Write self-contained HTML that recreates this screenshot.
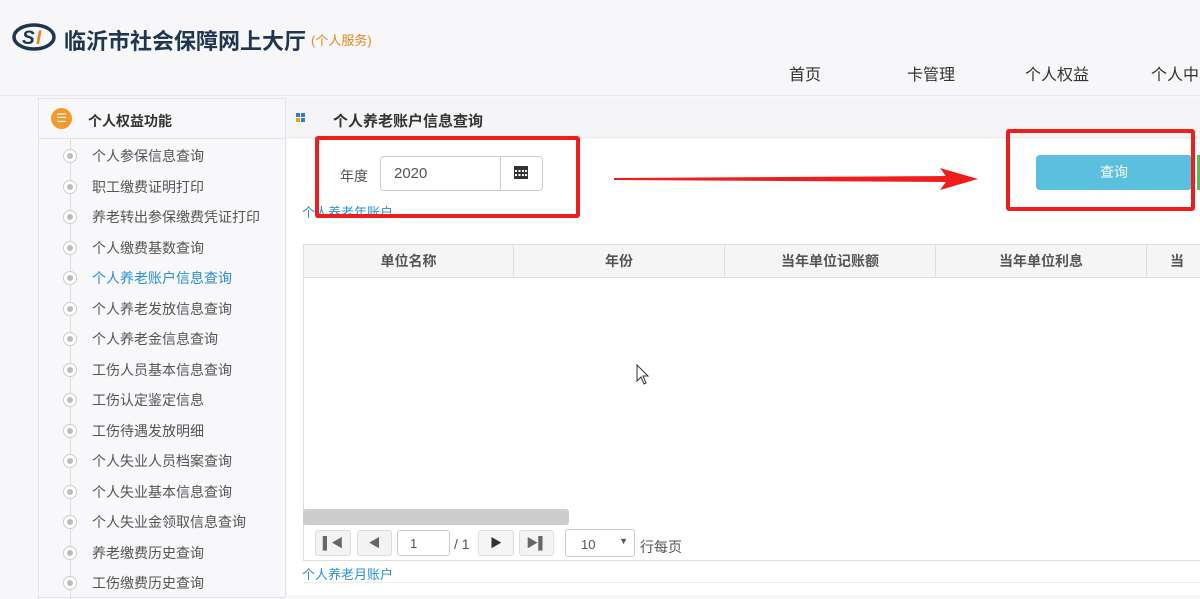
<!DOCTYPE html>
<html><head><meta charset="utf-8"><style>
*{margin:0;padding:0;box-sizing:border-box}
body{width:1200px;height:595px;overflow:hidden;background:#f7f6f9;font-family:"Liberation Sans","Noto Sans CJK SC",sans-serif;position:relative;color:#333}
.a{position:absolute;white-space:nowrap}
.nav{font-size:16px;color:#333;top:61px}
.side{left:38px;top:98px;width:248px;height:500px;border:1px solid #e3e3e8;background:#f8f7fa}
.item{position:absolute;left:54px;font-size:14px;color:#555;white-space:nowrap}
.dot{position:absolute;left:25px;width:14px;height:14px;border:1px solid #ccc;border-radius:50%;background:#fff}
.dot:after{content:"";position:absolute;left:3px;top:3px;width:6px;height:6px;border-radius:50%;background:#bbb}
.th{position:absolute;top:0;height:33px;line-height:33px;text-align:center;font-size:14px;color:#555;font-weight:bold;border-right:1px solid #ddd}
.pb{position:absolute;top:530px;height:26px;border:1px solid #ddd;border-radius:3px;background:#f3f3f3;font-size:12px;text-align:center;line-height:24px;color:#666}
</style></head><body>
<svg class="a" style="left:12px;top:23px" width="44" height="28" viewBox="0 0 44 28"><ellipse cx="22" cy="14" rx="20" ry="12" fill="none" stroke="#1f3550" stroke-width="3.5"/><text x="10" y="21" font-size="19" font-weight="bold" font-style="italic" fill="#1f3550" font-family="Liberation Sans">S</text><text x="24" y="21" font-size="19" font-weight="bold" font-style="italic" fill="#e08a1e" font-family="Liberation Sans">I</text></svg>
<div class="a" style="left:64px;top:24px;font-size:22px;font-weight:bold;color:#1f3550">临沂市社会保障网上大厅</div>
<div class="a" style="left:311px;top:30px;font-size:13px;color:#e08a1e">(个人服务)</div>
<div class="a nav" style="left:789px">首页</div>
<div class="a nav" style="left:907px">卡管理</div>
<div class="a nav" style="left:1025px">个人权益</div>
<div class="a nav" style="left:1151px">个人中心</div>
<div class="a" style="left:0;top:95px;width:1200px;height:1px;background:#e8e8ec"></div>

<div class="a side">
<div style="height:40px;border-bottom:1px solid #e3e3e8;position:relative">
<div style="position:absolute;left:12px;top:9px;width:21px;height:21px;border-radius:50%;background:#f39a2c;color:#fff;font-size:12px;text-align:center;line-height:21px">☰</div>
<div style="position:absolute;left:49px;top:12px;font-size:14px;font-weight:bold;color:#333">个人权益功能</div></div>
<div style="position:absolute;left:31px;top:40px;width:1px;height:460px;background:#ddd"></div>
</div>
<div id="items"></div>
<script>
var t=["个人参保信息查询","职工缴费证明打印","养老转出参保缴费凭证打印","个人缴费基数查询","个人养老账户信息查询","个人养老发放信息查询","个人养老金信息查询","工伤人员基本信息查询","工伤认定鉴定信息","工伤待遇发放明细","个人失业人员档案查询","个人失业基本信息查询","个人失业金领取信息查询","养老缴费历史查询","工伤缴费历史查询"];
var h="";t.forEach(function(s,i){var y=148+i*30.5;h+='<div class="dot" style="left:63px;top:'+(y+1)+'px"></div><div class="item" style="left:92px;top:'+(y-2)+'px;'+(i==4?'color:#2a8fd6':'')+'">'+s+'</div>'});
document.getElementById("items").innerHTML=h;
</script>

<div class="a" style="left:287px;top:98px;width:913px;height:40px;background:#f5f5f7;border-bottom:1px solid #eee"></div>
<svg class="a" style="left:296px;top:113px" width="10" height="10"><rect x="0" y="0" width="4" height="4" fill="#2a7fd0"/><rect x="5" y="0" width="4" height="4" fill="#2a7fd0"/><rect x="0" y="5" width="4" height="4" fill="#f0a020"/><rect x="5" y="5" width="4" height="4" fill="#2a7fd0"/></svg>
<div class="a" style="left:333px;top:110px;font-size:15px;font-weight:bold;color:#333">个人养老账户信息查询</div>
<div class="a" style="left:287px;top:139px;width:913px;height:456px;background:#fff"></div>
<div class="a" style="left:340px;top:166px;font-size:14px;color:#555">年度</div>
<div class="a" style="left:380px;top:156px;width:163px;height:35px;border:1px solid #ccc;border-radius:4px;background:#fff"></div>
<div class="a" style="left:500px;top:156px;width:1px;height:35px;background:#ccc"></div>
<div class="a" style="left:394px;top:165px;font-size:15px;color:#555">2020</div>
<svg class="a" style="left:514px;top:166px" width="14" height="13"><rect x="0" y="0" width="14" height="13" fill="#333"/><g fill="#fff"><rect x="1" y="4" width="2" height="2"/><rect x="4.5" y="4" width="2" height="2"/><rect x="8" y="4" width="2" height="2"/><rect x="11" y="4" width="2" height="2"/><rect x="1" y="8" width="2" height="2"/><rect x="4.5" y="8" width="2" height="2"/><rect x="8" y="8" width="2" height="2"/><rect x="11" y="8" width="2" height="2"/></g></svg>
<div class="a" style="left:302px;top:202px;font-size:13px;color:#2a8fd6">个人养老年账户</div>
<div class="a" style="left:1036px;top:155px;width:156px;height:35px;border-radius:4px;background:#5bc0de;color:#fff;font-size:14px;text-align:center;line-height:35px">查询</div>
<div class="a" style="left:1197px;top:155px;width:3px;height:35px;background:#5cb85c"></div>

<div class="a" style="left:303px;top:244px;width:897px;height:317px;border:1px solid #ddd;border-right:none"></div>
<div class="a" style="left:303px;top:244px;width:897px;height:34px;background:#f5f5f5;border:1px solid #ddd;border-right:none">
<div class="th" style="left:0;width:210px">单位名称</div>
<div class="th" style="left:210px;width:211px">年份</div>
<div class="th" style="left:421px;width:211px">当年单位记账额</div>
<div class="th" style="left:632px;width:211px">当年单位利息</div>
<div class="th" style="left:843px;width:60px;border:none">当</div>
</div>
<div class="a" style="left:303px;top:509px;width:266px;height:16px;background:#cdcdcf;border-radius:3px"></div>
<div class="pb" style="left:315px;width:36px">&#9612;&#9664;</div>
<div class="pb" style="left:357px;width:35px">&#9664;</div>
<div class="a" style="left:397px;top:530px;width:53px;height:26px;border:1px solid #ccc;border-radius:3px;background:#fff;font-size:13px;color:#555;padding:5px 0 0 12px">1</div>
<div class="a" style="left:454px;top:536px;font-size:14px;color:#555">/ 1</div>
<div class="pb" style="left:478px;width:36px;color:#333;background:#f5f5f5">&#9654;</div>
<div class="pb" style="left:519px;width:35px">&#9654;&#9612;</div>
<div class="a" style="left:565px;top:529px;width:70px;height:28px;border:1px solid #ccc;border-radius:3px;background:#fff;font-size:13px;color:#555;padding:7px 0 0 15px">10<span style="position:absolute;right:6px;top:6px;font-size:9px">▼</span></div>
<div class="a" style="left:640px;top:537px;font-size:14px;color:#555">行每页</div>
<div class="a" style="left:302px;top:564px;font-size:13px;color:#2a8fd6">个人养老月账户</div>
<div class="a" style="left:303px;top:582px;width:897px;height:1px;background:#eee"></div>

<svg class="a" style="left:636px;top:364px" width="14" height="22"><path d="M1 1 L1 17 L5 13 L8 20 L10 19 L7 12 L12 12 Z" fill="#fff" stroke="#333" stroke-width="1"/></svg>

<div class="a" style="left:315px;top:136px;width:265px;height:82px;border:4px solid #f01d1d;border-radius:3px"></div>
<div class="a" style="left:1006px;top:129px;width:189px;height:82px;border:4px solid #f01d1d;border-radius:3px"></div>
<svg class="a" style="left:610px;top:164px" width="372" height="30"><path d="M4 14 L340 12 L340 18 L4 16 Z" fill="#f01d1d"/><path d="M330 4 L368 15 L330 26 L338 15 Z" fill="#f01d1d"/></svg>
</body></html>
